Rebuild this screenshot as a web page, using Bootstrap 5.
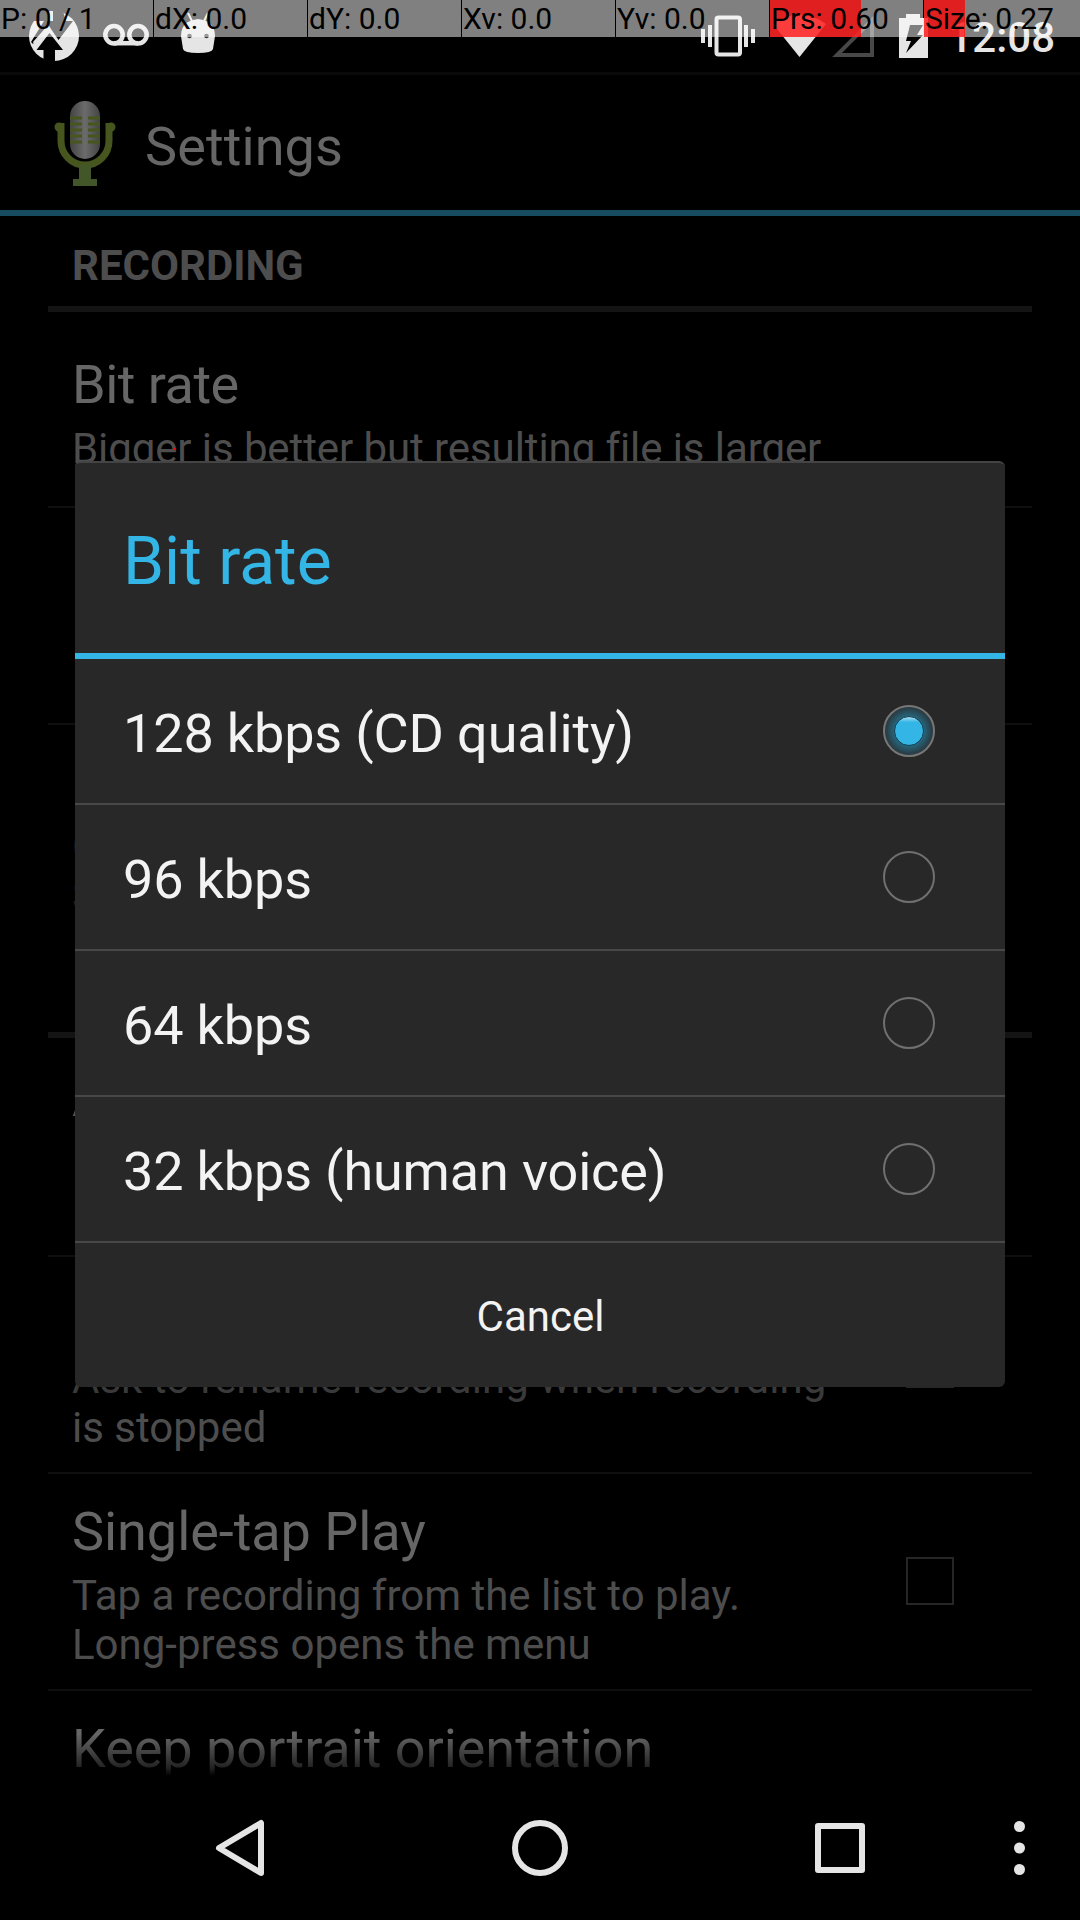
<!DOCTYPE html>
<html lang="en">
<head>
<meta charset="utf-8">
<title>Settings</title>
<link href="https://cdn.jsdelivr.net/npm/bootstrap@5.3.0/dist/css/bootstrap.min.css" rel="stylesheet">
<style>
html,body{background:#000;margin:0}
body{font-family:Roboto,"Noto Sans",sans-serif;width:1080px;height:1920px;overflow:hidden;line-height:normal}
.screen{width:1080px;height:1920px;background:#000;overflow:hidden}
.statusbar{height:75px;border-bottom:3px solid #0a0a0a}
.statusbar svg{display:block;width:1080px;height:72px}
.clock{right:25px;top:11px;font-size:42px;line-height:54px;color:#e5e5e5;font-weight:500;}
.pointerbar{height:37px;font-size:30px;line-height:37px;color:#000}
.pointerbar>div{width:153px;margin-right:1px;background:rgba(255,255,255,.5);position:relative;white-space:pre;height:37px;flex:none}
.pointerbar>div.lastcell{width:156px;margin-right:0}
.level{left:0;top:0;height:37px;background:rgba(255,0,0,.753)}
.pointerbar span{position:relative;padding-left:1px}
.actionbar{height:141px;border-bottom:6px solid #174b60;padding-left:48px}
.actionbar svg{width:72px;height:96px;margin-right:25px;margin-bottom:5px}
.actionbar h1{font-size:54px;color:#666;font-weight:400;margin:8px 0 0;line-height:64px;letter-spacing:.1px}
.prefs{height:1560px;padding:0 48px;overflow:hidden}
.cat{height:96px;border-bottom:6px solid #141414;padding:0 24px;font-size:42px;font-weight:700;color:#4d4d4d;line-height:100px}
.pref{height:217px;border-bottom:2px solid #0f0f0f;padding:0 78px 0 24px}
.pref .txt{padding-top:26px;align-self:flex-start}
.pref.short{height:196px}
.pref.short .txt{padding-top:41px}
.pref.short .ttl{letter-spacing:-.5px}
.pref.short .sum{letter-spacing:-.09px}
.pref.first{height:219px;padding-top:2px}
.pref.last{border-bottom-color:transparent}
.pref .ttl{font-size:54px;line-height:63px;height:71px;color:#666;white-space:nowrap;letter-spacing:-.05px}
.pref .sum{font-size:42px;line-height:49px;color:#4d4d4d;white-space:nowrap}
.pref.faint .sum{color:#3a3a3a}
.pref.edge .ttl{color:#555}
.pref.edge .sum{color:#222}
.chk{width:48px;height:48px;border:2px solid #262626;flex:none;margin-bottom:2px}
.fade-end{left:0;top:1734px;width:1080px;height:42px;background:linear-gradient(rgba(0,0,0,0),rgba(0,0,0,.66) 80%,#000)}
.navbtns{height:144px}
.navbtns svg{width:1080px;height:144px;display:block}
.dlg{left:75px;top:461px;width:930px;height:926px;background:#282828;border-radius:6px;border-top:2px solid #444;overflow:hidden}
.dlg .head{height:196px;border-bottom:6px solid #33b5e5;padding-left:48px;font-size:66px;line-height:198px;color:#33b5e5}
.opt{height:146px;border-bottom:2px solid #484848;padding:0 70px 0 48px;font-size:54px;color:#f3f3f3;letter-spacing:-.16px}
.opt span{padding-top:4px}
.opt svg{width:52px;height:52px;flex:none}
.cancel{height:144px;font-size:42px;line-height:148px;color:#f3f3f3;text-align:center;border:0;background:none;padding:0 0 0 1px;width:100%}
.touchdot{left:174px;top:448px;width:2px;height:2px;background:#f00}
</style>
</head>
<body>
<div class="screen position-relative d-flex flex-column">
  <header class="statusbar position-relative">
    <svg viewBox="0 0 1080 72">
      <circle cx="54" cy="36" r="25" fill="#e5e5e5"/>
      <path d="M33 21H47V11H38L28 24ZM53 21V8H62L66 21Z"/>
      <path d="M60 21H73L58.500 40L49 26L33 44L31 42L44 21H53ZM49.500 33L63 50H55V64H43.500V50H36.500Z"/>
      <path fill="#e5e5e5" d="M48 11H53V21H48ZM33 42L49 24V32L36 48Z"/>
      <g fill="none" stroke="#e5e5e5" stroke-width="4.500">
        <circle cx="114" cy="34.800" r="8.700"/><circle cx="138" cy="34.800" r="8.700"/><path d="M114 43.200H138"/>
      </g>
      <path fill="#e5e5e5" d="M181 36Q181 21 198 19Q215 21 215 36L213 49Q212 53 198 53Q184 53 183 49Z"/>
      <path stroke="#e5e5e5" stroke-width="2" d="M188 13L192 21M208 13L204 21"/>
      <circle cx="189.500" cy="36" r="2.300" fill="#333"/><circle cx="206.500" cy="36" r="2.300" fill="#333"/>
      <rect x="716.500" y="17.500" width="23.500" height="37" rx="2" fill="none" stroke="#e5e5e5" stroke-width="4"/>
      <path fill="#e5e5e5" d="M708 25h4v22h-4zM701 29h4v14h-4zM744 25h4v22h-4zM751 29h4v14h-4z"/>
      <path fill="#e5e5e5" d="M799.500 57L773 24Q799.500 5 826 24Z"/>
      <path fill="none" stroke="#484848" stroke-width="4" d="M837 55H872V20Z"/>
      <path fill="#e5e5e5" fill-rule="evenodd" d="M899 18H906V14H920V18H928V58H899ZM910 25L906 41H911L906 53L923 35H917L923 25Z"/>
    </svg>
    <div class="clock position-absolute">12:08</div>
    <div class="pointerbar position-absolute top-0 start-0 d-flex">
      <div><span>P: 0 / 1</span></div><div><span>dX: 0.0</span></div><div><span>dY: 0.0</span></div><div><span>Xv: 0.0</span></div><div><span>Yv: 0.0</span></div>
      <div><i class="level position-absolute" style="width:calc(152px * .6)"></i><span>Prs: 0.60</span></div>
      <div class="lastcell"><i class="level position-absolute" style="width:calc(150px * .27)"></i><span>Size: 0.27</span></div>
    </div>
  </header>
  <div class="actionbar d-flex align-items-center">
    <svg viewBox="0 0 72 96">
      <defs><linearGradient id="cap"><stop offset="0" stop-color="#444"/><stop offset=".5" stop-color="#6b6b6b"/><stop offset="1" stop-color="#444"/></linearGradient></defs>
      <path fill="none" stroke="#46561e" stroke-width="7" d="M13 31V49A24 24 0 0 0 61 49V31"/>
      <circle cx="11" cy="35" r="4.500" fill="#46561e"/><circle cx="63" cy="35" r="4.500" fill="#46561e"/>
      <path fill="#43562a" d="M31 73H43V87H49V94H25V87H31Z"/>
      <rect x="22" y="9" width="30" height="58" rx="15" fill="url(#cap)"/>
      <path stroke="#46561e" stroke-width="3" d="M22 26H34M40 26H52M22 32H34M40 32H52M22 38H34M40 38H52M22 44H34M40 44H52M22 50H34M40 50H52"/>
    </svg>
    <h1>Settings</h1>
  </div>
  <main class="prefs">
    <div class="cat">RECORDING</div>
    <div class="pref short d-flex"><div class="txt"><div class="ttl">Bit rate</div><div class="sum">Bigger is better but resulting file is larger</div></div></div>
    <div class="pref"></div>
    <div class="pref edge last d-flex"><div class="txt"><div class="ttl"></div><div class="sum">C<br>S</div></div></div>
    <div class="cat"></div>
    <div class="pref edge first d-flex"><div class="txt"><div class="ttl">A</div></div></div>
    <div class="pref faint d-flex align-items-center justify-content-between"><div class="txt"><div class="ttl"></div><div class="sum">Ask to rename recording when recording<br><span style="color:#4d4d4d">is stopped</span></div></div><div class="chk"></div></div>
    <div class="pref d-flex align-items-center justify-content-between"><div class="txt"><div class="ttl">Single-tap Play</div><div class="sum">Tap a recording from the list to play.<br>Long-press opens the menu</div></div><div class="chk"></div></div>
    <div class="pref d-flex"><div class="txt"><div class="ttl">Keep portrait orientation</div></div></div>
  </main>
  <div class="fade-end position-absolute"></div>
  <nav class="navbtns">
    <svg viewBox="0 0 1080 144">
      <g fill="none" stroke="#e5e5e5" stroke-width="6" stroke-linejoin="round">
        <path d="M261 47V97L219 72Z"/>
        <circle cx="540" cy="72" r="25"/>
        <rect x="818" y="50" width="44" height="44"/>
      </g>
      <g fill="#e5e5e5"><circle cx="1019.500" cy="50.500" r="5.500"/><circle cx="1019.500" cy="72" r="5.500"/><circle cx="1019.500" cy="93.500" r="5.500"/></g>
    </svg>
  </nav>
  <section class="dlg position-absolute" role="dialog">
    <div class="head">Bit rate</div>
    <div class="opt d-flex align-items-center justify-content-between"><span>128 kbps (CD quality)</span>
      <svg viewBox="0 0 52 52"><defs><radialGradient id="glow"><stop offset=".55" stop-color="#266a83"/><stop offset="1" stop-color="#2a3337"/></radialGradient><linearGradient id="dot" x2="0" y2="1"><stop offset="0" stop-color="#b5e2f5"/><stop offset=".2" stop-color="#33b5e5"/></linearGradient></defs><circle cx="26" cy="26" r="25" fill="url(#glow)" stroke="#777" stroke-width="2"/><circle cx="26" cy="26" r="14.500" fill="url(#dot)" stroke="#153c4b" stroke-width="1"/></svg></div>
    <div class="opt d-flex align-items-center justify-content-between"><span>96 kbps</span><svg viewBox="0 0 52 52"><circle cx="26" cy="26" r="25" fill="none" stroke="#707070" stroke-width="2"/></svg></div>
    <div class="opt d-flex align-items-center justify-content-between"><span>64 kbps</span><svg viewBox="0 0 52 52"><circle cx="26" cy="26" r="25" fill="none" stroke="#707070" stroke-width="2"/></svg></div>
    <div class="opt d-flex align-items-center justify-content-between"><span>32 kbps (human voice)</span><svg viewBox="0 0 52 52"><circle cx="26" cy="26" r="25" fill="none" stroke="#707070" stroke-width="2"/></svg></div>
    <button class="cancel">Cancel</button>
  </section>
  <div class="touchdot position-absolute"></div>
</div>
<script src="https://cdn.jsdelivr.net/npm/bootstrap@5.3.0/dist/js/bootstrap.bundle.min.js"></script>
</body>
</html>
